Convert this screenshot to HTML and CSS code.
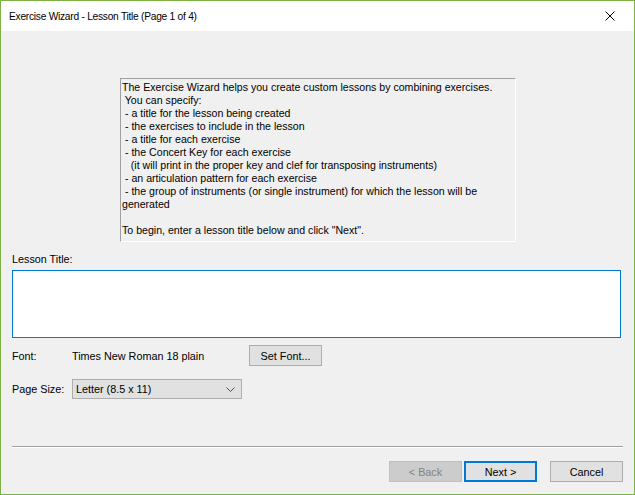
FILE: index.html
```html
<!DOCTYPE html>
<html lang="en">
<head>
    <meta charset="UTF-8">
    <title>Exercise Wizard - Lesson Title (Page 1 of 4)</title>
    <link rel="stylesheet" href="styles.css">
</head>
<body>
    <div class="window">
        <!-- Title bar -->
        <div class="titlebar">
            <span class="title">Exercise Wizard - Lesson Title (Page 1 of 4)</span>
            <svg class="close" width="10" height="10" viewBox="0 0 10 10">
                <path d="M0.5 0.5 L9.5 9.5 M9.5 0.5 L0.5 9.5" stroke="#000" stroke-width="1" fill="none"/>
            </svg>
        </div>

        <div class="content">
            <!-- Intro text -->
            <div class="info">The Exercise Wizard helps you create custom lessons by combining exercises.
 You can specify:
 - a title for the lesson being created
 - the exercises to include in the lesson
 - a title for each exercise
 - the Concert Key for each exercise
   (it will print in the proper key and clef for transposing instruments)
 - an articulation pattern for each exercise
 - the group of instruments (or single instrument) for which the lesson will be
generated

To begin, enter a lesson title below and click "Next".</div>

            <div class="label">Lesson Title:</div>
            <div class="title-input"></div>

            <div class="row font-row">
                <span class="row-label">Font:</span>
                <span class="font-name">Times New Roman 18 plain</span>
                <div class="btn set-font">Set Font...</div>
            </div>

            <div class="row size-row">
                <span class="row-label">Page Size:</span>
                <div class="select">
                    <span>Letter (8.5 x 11)</span>
                    <svg width="9" height="5" viewBox="0 0 9 5">
                        <path d="M0.5 0.5 L4.5 4.5 L8.5 0.5" stroke="#505050" stroke-width="1" fill="none"/>
                    </svg>
                </div>
            </div>

            <div class="separator"></div>

            <div class="buttons">
                <div class="btn disabled">&lt; Back</div>
                <div class="btn default">Next &gt;</div>
                <div class="btn cancel">Cancel</div>
            </div>
        </div>
    </div>
</body>
</html>
```

FILE: styles.css
```css
html, body {
    margin: 0;
    padding: 0;
}
body {
    font-family: "Liberation Sans", Arial, sans-serif;
    font-size: 10.8px;
    color: #000;
}
.window {
    width: 635px;
    height: 495px;
    box-sizing: border-box;
    border: 1px solid #7cb342;
    background: #f0f0f0;
    display: flex;
    flex-direction: column;
}
.titlebar {
    height: 30px;
    background: #fff;
    display: flex;
    align-items: center;
    justify-content: space-between;
    padding: 0 19px 0 8px;
}
.title {
    font-size: 10.2px;
    letter-spacing: -0.25px;
}
.content {
    flex: 1;
    padding: 0 10px 0 11px;
}
.info {
    width: 393px;
    height: 160px;
    margin: 47px 0 0 108px;
    padding: 2px 0 0 1px;
    border: 1px solid #a0a0a0;
    border-right-color: #fff;
    border-bottom-color: #fff;
    white-space: pre;
    font-size: 10.6px;
    line-height: 13px;
}
.label {
    margin-top: 10px;
    height: 18px;
    line-height: 14px;
}
.title-input {
    width: 607px;
    height: 66px;
    border: 1px solid #0078d7;
    background: #fff;
}
.row {
    display: flex;
    align-items: center;
}
.font-row {
    margin-top: 7px;
    height: 21px;
}
.size-row {
    margin-top: 13px;
    height: 20px;
}
.row-label {
    width: 60px;
}
.font-name {
    width: 177px;
}
.btn {
    box-sizing: border-box;
    width: 73px;
    height: 21px;
    border: 1px solid #adadad;
    background: #e1e1e1;
    display: flex;
    align-items: center;
    justify-content: center;
}
.select {
    box-sizing: border-box;
    width: 170px;
    height: 20px;
    border: 1px solid #adadad;
    background: #e1e1e1;
    display: flex;
    align-items: center;
    justify-content: space-between;
    padding: 0 6px 0 3px;
}
.separator {
    margin-top: 47px;
    height: 1px;
    width: 611px;
    background: #a0a0a0;
    border-bottom: 1px solid #fff;
}
.buttons {
    margin-top: 13px;
    display: flex;
    justify-content: flex-end;
    padding-right: 1px;
}
.btn.disabled {
    background: #cccccc;
    border-color: #bfbfbf;
    color: #838383;
}
.btn.default {
    margin-left: 2px;
    border: 2px solid #0078d7;
}
.btn.cancel {
    margin-left: 13px;
}
```
